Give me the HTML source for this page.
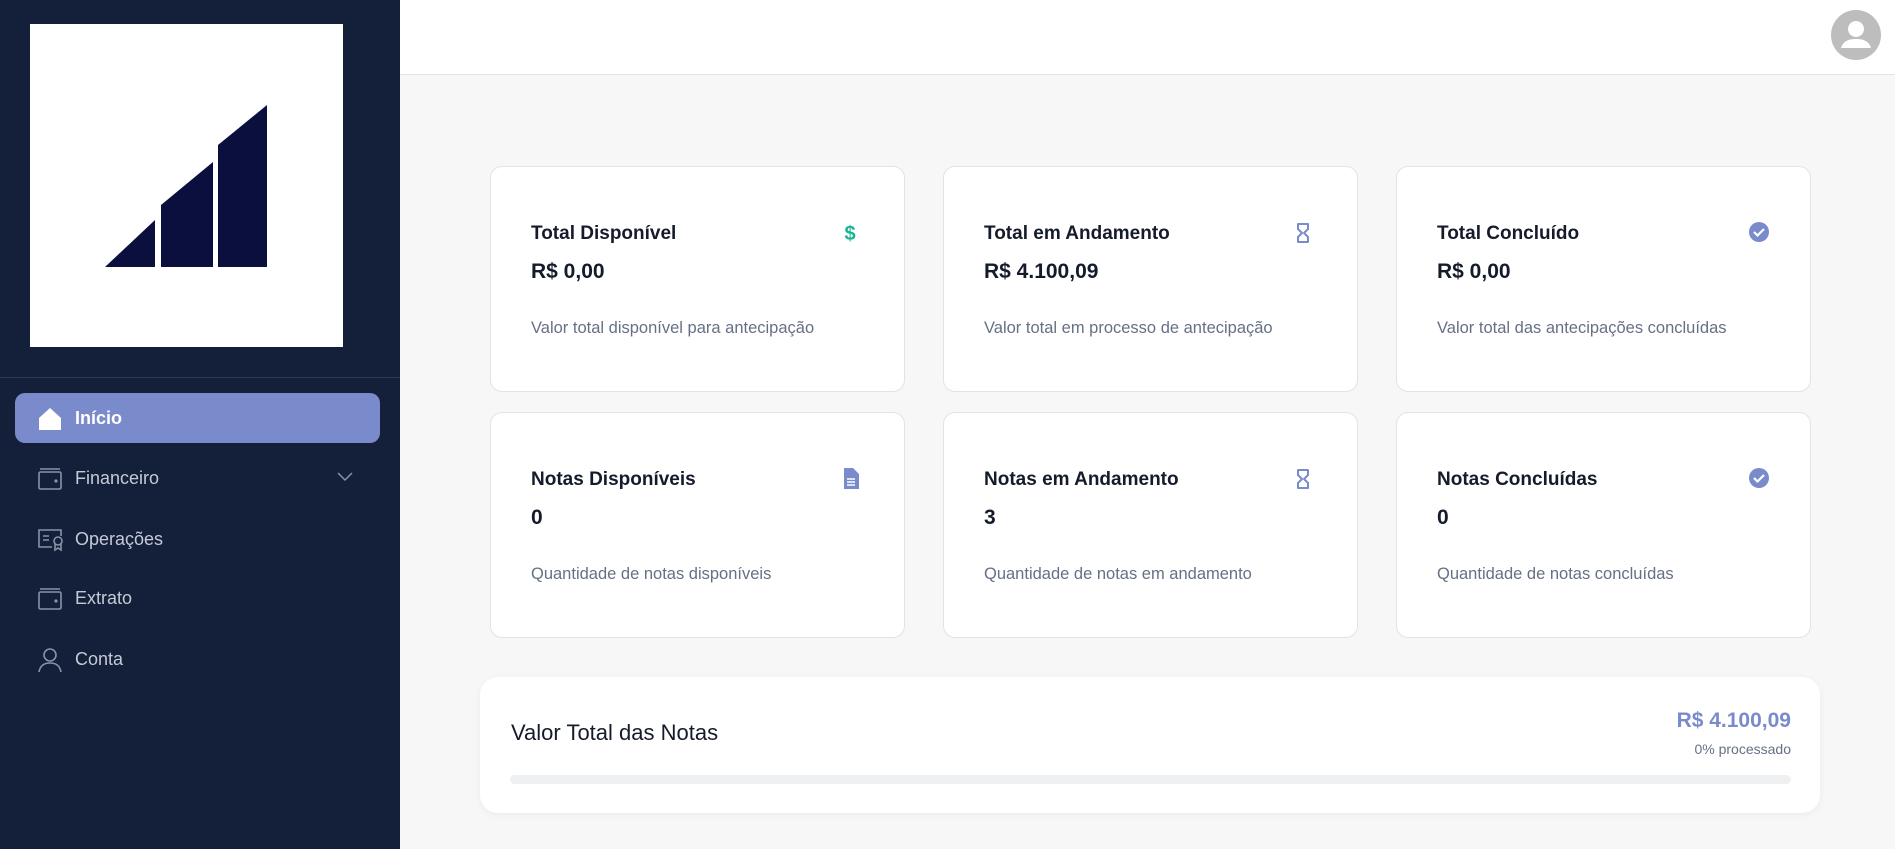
<!DOCTYPE html>
<html><head><meta charset="utf-8"><style>
*{box-sizing:border-box;margin:0;padding:0}
body{width:1895px;height:849px;overflow:hidden;font-family:"Liberation Sans",sans-serif;background:#f7f7f7;position:relative}
.sb{position:absolute;left:0;top:0;width:400px;height:849px;background:#141f39}
.logo{position:absolute;left:30px;top:24px;width:313px;height:323px;background:#fff}
.div{position:absolute;left:0;top:377px;width:400px;height:1px;background:#2c3752}
.nav{position:absolute;left:15px;width:365px;height:50px;border-radius:10px;color:#c4cad6;font-size:18px;display:flex;align-items:center;padding-left:60px}
.nav svg{position:absolute;left:22px;top:13px}
.nav.act{background:#7a8bcc;color:#fff;font-weight:bold}
.hdr{position:absolute;left:400px;top:0;width:1495px;height:75px;background:#fff;border-bottom:1px solid #e3e3e3}
.av{position:absolute;left:1831px;top:10px;width:50px;height:50px;border-radius:50%;background:#bdbdbd;overflow:hidden}
.card{position:absolute;width:415px;height:226px;background:#fff;border:1px solid #e3e3e3;border-radius:12px}
.card .t{position:absolute;left:40px;top:56px;font-size:19px;font-weight:bold;color:#151b2b}
.card .v{position:absolute;left:40px;top:93px;font-size:21px;font-weight:bold;color:#151b2b}
.card .d{position:absolute;left:40px;top:152px;font-size:16.5px;color:#667085}
.card svg{position:absolute;left:350px;top:54px}
.panel{position:absolute;left:480px;top:677px;width:1340px;height:136px;background:#fff;border-radius:18px;box-shadow:0 2px 8px rgba(0,0,0,.05)}
</style></head><body>
<div class="sb">
<div class="logo"><svg width="313" height="323" viewBox="30 24 313 323"><g fill="#0a0f3d"><polygon points="105,267 155,220 155,267"/><polygon points="161,267 161,205 213,162 213,267"/><polygon points="218,267 218,145 267,105 267,267"/></g></svg></div>
<div class="div"></div>
<div class="nav act" style="top:393px"><svg width="26" height="26" viewBox="0 0 26 26"><path d="M2 12 L13 2 L24 12 V24 H2 Z" fill="#fff"/></svg>Início</div>
<div class="nav" style="top:453px"><svg width="26" height="26" viewBox="0 0 26 26" fill="none" stroke="#8a93a6" stroke-width="1.6"><rect x="2" y="6" width="22" height="17" rx="1.5"/><path d="M3 3h20"/><circle cx="19" cy="15" r=".8" fill="#8a93a6"/></svg>Financeiro<svg style="left:322px;top:19px" width="16" height="10" viewBox="0 0 16 10"><path d="M1 1l7 7 7-7" fill="none" stroke="#8a93a6" stroke-width="1.5"/></svg></div>
<div class="nav" style="top:514px"><svg width="28" height="26" viewBox="0 0 28 26" fill="none" stroke="#8a93a6" stroke-width="1.6"><path d="M15 20H2V3h22v6"/><path d="M6 9h6M6 13h6"/><circle cx="21" cy="14" r="4"/><path d="M18 17v6l3-2 3 2v-6"/></svg>Operações</div>
<div class="nav" style="top:573px"><svg width="26" height="26" viewBox="0 0 26 26" fill="none" stroke="#8a93a6" stroke-width="1.6"><rect x="2" y="6" width="22" height="17" rx="1.5"/><path d="M3 3h20"/><circle cx="19" cy="15" r=".8" fill="#8a93a6"/></svg>Extrato</div>
<div class="nav" style="top:634px"><svg width="26" height="26" viewBox="0 0 26 26" fill="none" stroke="#8a93a6" stroke-width="1.6"><circle cx="13" cy="8" r="6"/><path d="M2 25c1-6 5-9 11-9s10 3 11 9"/></svg>Conta</div>
</div>
<div class="hdr"></div>
<div class="av"><svg width="50" height="50" viewBox="0 0 50 50"><circle cx="25" cy="19" r="8" fill="#fff"/><path d="M10 38c2-7 8-9 15-9s13 2 15 9z" fill="#fff"/></svg></div>

<div class="card" style="left:490px;top:166px"><div class="t">Total Disponível</div><div class="v">R$ 0,00</div><div class="d">Valor total disponível para antecipação</div><svg width="18" height="24" viewBox="0 0 18 24"><text x="9" y="19" text-anchor="middle" font-family="Liberation Sans" font-weight="bold" font-size="20" fill="#1bb394">$</text></svg></div>
<div class="card" style="left:943px;top:166px"><div class="t">Total em Andamento</div><div class="v">R$ 4.100,09</div><div class="d">Valor total em processo de antecipação</div><svg width="18" height="24" viewBox="0 0 18 24"><path d="M4 3h10v5l-4 4 4 4v5H4v-5l4-4-4-4z" fill="none" stroke="#7a8bcc" stroke-width="2" stroke-linejoin="round"/></svg></div>
<div class="card" style="left:1396px;top:166px"><div class="t">Total Concluído</div><div class="v">R$ 0,00</div><div class="d">Valor total das antecipações concluídas</div><svg width="24" height="24" viewBox="0 0 24 24"><circle cx="12" cy="11" r="10" fill="#7a8bcc"/><path d="M7 11l3.5 3.5L17 8" fill="none" stroke="#fff" stroke-width="2.2"/></svg></div>
<div class="card" style="left:490px;top:412px"><div class="t">Notas Disponíveis</div><div class="v">0</div><div class="d">Quantidade de notas disponíveis</div><svg width="20" height="24" viewBox="0 0 20 24"><path d="M3 1h9l6 6v15H3z" fill="#7a8bcc"/><path d="M6 12h8M6 15h8M6 18h8" stroke="#fff" stroke-width="1.5"/></svg></div>
<div class="card" style="left:943px;top:412px"><div class="t">Notas em Andamento</div><div class="v">3</div><div class="d">Quantidade de notas em andamento</div><svg width="18" height="24" viewBox="0 0 18 24"><path d="M4 3h10v5l-4 4 4 4v5H4v-5l4-4-4-4z" fill="none" stroke="#7a8bcc" stroke-width="2" stroke-linejoin="round"/></svg></div>
<div class="card" style="left:1396px;top:412px"><div class="t">Notas Concluídas</div><div class="v">0</div><div class="d">Quantidade de notas concluídas</div><svg width="24" height="24" viewBox="0 0 24 24"><circle cx="12" cy="11" r="10" fill="#7a8bcc"/><path d="M7 11l3.5 3.5L17 8" fill="none" stroke="#fff" stroke-width="2.2"/></svg></div>

<div class="panel">
<div style="position:absolute;left:31px;top:43px;font-size:22px;color:#151b2b">Valor Total das Notas</div>
<div style="position:absolute;right:29px;top:32px;font-size:21px;color:#7a8bcc;font-weight:bold">R$ 4.100,09</div>
<div style="position:absolute;right:29px;top:64px;font-size:14px;color:#667085">0% processado</div>
<div style="position:absolute;left:30px;right:29px;top:98px;height:9px;border-radius:5px;background:#eef0f2"></div>
</div>
</body></html>
